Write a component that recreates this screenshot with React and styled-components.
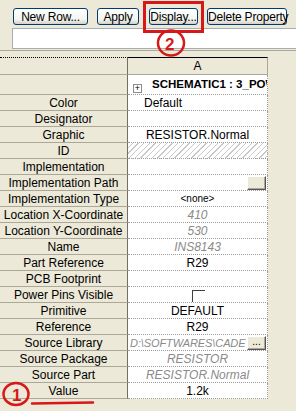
import styled, { createGlobalStyle } from 'styled-components'

const GlobalStyle = createGlobalStyle`
    body {
        margin: 0;
        background: #ece9d8;
        font-family: "Liberation Sans", Arial, sans-serif;
    }
`

const Page = styled.div`
    position: relative;
    width: 296px;
    height: 411px;
    overflow: hidden;
    background: #ece9d8;
`

const Toolbar = styled.div`
    padding: 8px 0 0 13px;
    box-sizing: border-box;
    height: 51px;
    border-bottom: 1px solid #aca899;
`

const ButtonRow = styled.div`
    display: flex;
    gap: 9px;
`

const Button = styled.button`
    width: ${ ({ w }) => w }px;
    height: 17px;
    padding: 0;
    border: 1px solid #003c74;
    border-radius: 3px;
    background: linear-gradient(#ffffff, #f3f3ef 70%, #d6d0c5);
    font-family: inherit;
    font-size: 12px;
    letter-spacing: -0.2px;
    white-space: nowrap;
    color: #000;
    margin-right: ${ ({ extra }) => extra || 0 }px;
`

const Input = styled.div`
    margin: 3px -20px 0 -1px;
    height: 21px;
    background: #fff;
    border: 1px solid #a5acb2;
    box-sizing: border-box;
`

const Grid = styled.div`
    margin-top: 6px;
    display: grid;
    grid-template-columns: 128px 140px;
`

const Corner = styled.div`
    height: 18px;
    box-sizing: border-box;
    border-top: 1px dotted #000;
    border-right: 1px solid #716f64;
    border-bottom: 1px solid #aca899;
`

const ColHead = styled.div`
    height: 18px;
    box-sizing: border-box;
    border-top: 1px solid #000;
    border-right: 1px solid #aca899;
    border-bottom: 1px solid #aca899;
    text-align: center;
    font-size: 12px;
    line-height: 17px;
`

const Label = styled.div`
    height: ${ ({ h }) => h || 16 }px;
    box-sizing: border-box;
    border-right: 1px solid #716f64;
    border-bottom: 1px solid #aca899;
    text-align: center;
    font-size: 12px;
    line-height: 16px;
    color: #000;
    white-space: nowrap;
    overflow: hidden;
`

const Cell = styled.div`
    position: relative;
    height: ${ ({ h }) => h || 16 }px;
    box-sizing: border-box;
    background: ${ ({ hatched }) => hatched
        ? 'repeating-linear-gradient(135deg, #fff 0 3px, #c8c8c8 3px 4px)'
        : '#fff' };
    border-right: 1px dotted #9c9c9c;
    border-bottom: 1px dotted #9c9c9c;
    text-align: ${ ({ left }) => left ? 'left' : 'center' };
    padding-left: ${ ({ left }) => left ? 16 : 0 }px;
    font-size: ${ ({ small }) => small ? 10 : 12 }px;
    line-height: 16px;
    font-style: ${ ({ dim }) => dim ? 'italic' : 'normal' };
    color: ${ ({ dim }) => dim ? '#8a8a8a' : '#000' };
    white-space: nowrap;
    overflow: hidden;
`

const Clip = styled.span`
    display: block;
    width: 116px;
    padding-left: 2px;
    font-size: 11px;
    letter-spacing: -0.1px;
    text-align: left;
    overflow: hidden;
`

const GroupCell = styled(Cell)`
    display: flex;
    align-items: flex-start;
    gap: 10px;
    padding: 1px 0 0 5px;
    font-weight: bold;
    font-size: 11.5px;
    text-align: left;
`

const PlusBox = styled.span`
    margin-top: 8px;
    width: 9px;
    height: 9px;
    box-sizing: border-box;
    border: 1px solid #8c8c8c;
    font-size: 9px;
    line-height: 7px;
    font-weight: normal;
    text-align: center;
    flex: none;
`

const Ellipsis = styled.span`
    position: absolute;
    right: 1px;
    top: 1px;
    width: 19px;
    height: 14px;
    box-sizing: border-box;
    background: #ece9d8;
    border: 1px solid;
    border-color: #fff #555 #555 #fff;
    box-shadow: inset -1px -1px 0 #aca899;
    font-size: 10px;
    line-height: 9px;
    font-style: normal;
    color: #000;
    text-align: center;
`

const Check = styled.span`
    display: inline-block;
    margin-top: 3px;
    margin-left: 2px;
    width: 13px;
    height: 13px;
    box-sizing: border-box;
    border-top: 1px solid #404040;
    border-left: 1px solid #404040;
`

const Marks = styled.svg`
    position: absolute;
    left: 0;
    top: 0;
    pointer-events: none;
`

const MarkText = styled.text`
    font-family: "Liberation Sans", Arial, sans-serif;
    font-weight: bold;
    fill: #d81818;
`

const rows = [
    { label: 'Color', value: 'Default', left: true },
    { label: 'Designator' },
    { label: 'Graphic', value: 'RESISTOR.Normal' },
    { label: 'ID', hatched: true },
    { label: 'Implementation' },
    { label: 'Implementation Path', button: true },
    { label: 'Implementation Type', value: '<none>', small: true },
    { label: 'Location X-Coordinate', value: '410', dim: true },
    { label: 'Location Y-Coordinate', value: '530', dim: true },
    { label: 'Name', value: 'INS8143', dim: true },
    { label: 'Part Reference', value: 'R29' },
    { label: 'PCB Footprint' },
    { label: 'Power Pins Visible', check: true },
    { label: 'Primitive', value: 'DEFAULT' },
    { label: 'Reference', value: 'R29' },
    { label: 'Source Library', value: 'D:\\SOFTWARES\\CADE', dim: true, button: true },
    { label: 'Source Package', value: 'RESISTOR', dim: true },
    { label: 'Source Part', value: 'RESISTOR.Normal', dim: true },
    { label: 'Value', value: '1.2k' },
]

const App = () => {
    return (
        <Page>
            <GlobalStyle />
            <Toolbar>
                <ButtonRow>
                    <Button w={75}>New Row...</Button>
                    <Button w={42} extra={1}>Apply</Button>
                    <Button w={49}>Display...</Button>
                    <Button w={80}>Delete Property</Button>
                </ButtonRow>
                <Input />
            </Toolbar>
            <Grid>
                <Corner />
                <ColHead>A</ColHead>
                <Label h={20} />
                <GroupCell h={20}>
                    <PlusBox>+</PlusBox>
                    SCHEMATIC1 : 3_POWER
                </GroupCell>
                {rows.map((r) => [
                    <Label key={r.label + 'l'}>{r.label}</Label>,
                    <Cell key={r.label + 'v'} hatched={r.hatched} left={r.left}
                        small={r.small} dim={r.dim}>
                        {r.button && r.value ? <Clip>{r.value}</Clip> : r.value}
                        {r.check && <Check />}
                        {r.button && <Ellipsis>{r.value ? '...' : ''}</Ellipsis>}
                    </Cell>,
                ])}
            </Grid>
            <Marks width="296" height="411">
                <rect x="144.5" y="2.5" width="58" height="29" fill="none" stroke="#d81818" strokeWidth="3" />
                <ellipse cx="171" cy="43" rx="13" ry="12.5" fill="none" stroke="#d81818" strokeWidth="2.5" />
                <MarkText x="165" y="50" fontSize="17">2</MarkText>
                <ellipse cx="16" cy="394" rx="12.5" ry="11" fill="none" stroke="#d81818" strokeWidth="2.5" />
                <MarkText x="12" y="401" fontSize="17">1</MarkText>
                <path d="M32 403.5 Q60 403 93 402.5" fill="none" stroke="#d81818" strokeWidth="2.5" strokeLinecap="round" />
            </Marks>
        </Page>
    )
}

export default App
